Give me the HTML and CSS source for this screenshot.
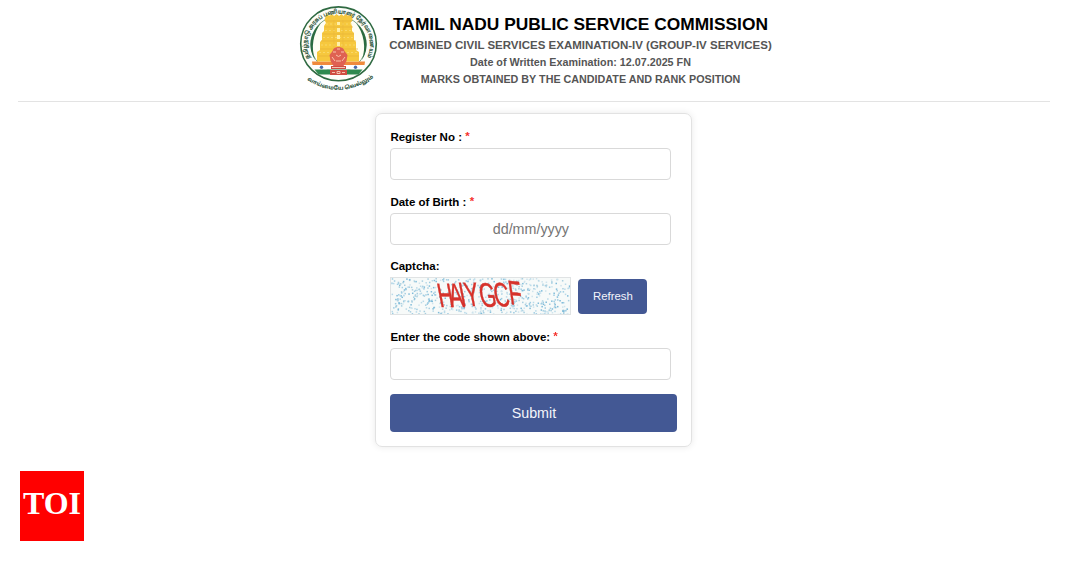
FILE: index.html
```html
<!DOCTYPE html>
<html lang="en">
<head>
    <meta charset="UTF-8">
    <title>Tamil Nadu Public Service Commission</title>
    <link rel="stylesheet" href="styles.css">
</head>
<body>
    <header class="header">
        <svg class="emblem" viewBox="0 0 78 86">
            <defs>
                <path id="top-arc" d="M10.500 53 A31.3 31.3 0 1 1 66.500 53"/>
                <path id="bottom-arc" d="M3 71 Q38.5 97 76 70"/>
            </defs>
            <ellipse cx="38.5" cy="37.8" rx="37.8" ry="36.9" fill="#fdfdf9" stroke="#2f6a42" stroke-width="1.6"/>
            <circle cx="38.5" cy="38" r="27.6" fill="#fffef4" stroke="#5d8a66" stroke-width=".8"/>
            <path d="M21 17 A27.5 27.5 0 0 0 15 54 A40 40 0 0 1 21 17zM56 17 A27.5 27.5 0 0 1 62 54 A40 40 0 0 0 56 17z" fill="#2b6b40"/>
            <!-- flag band -->
            <path d="M12 55.500h53l-.5 3.500h-52z" fill="#f08a3c"/>
            <path d="M12.500 59h52l-2 4.500h-48z" fill="#fff"/>
            <path d="M14.500 63.500h48l-4 5h-40z" fill="#2f8a50"/>
            <circle cx="21.5" cy="61.3" r="1.7" fill="#4868a8"/>
            <circle cx="55.5" cy="61.3" r="1.7" fill="#4868a8"/>
            <!-- temple tower -->
            <path d="M26.5 7 q1 3 3.5 2.5 l2-1.5 2 2 2.500-2 2.500 2 2.500-2 2 2 2-2 2 1.500 Q51 10 52 7 l.5 7-2 3 1.500 3v5l2 2v7l2 2v8l3 2v9.500H17V46l3-2v-8l2-2v-7l2-2v-5l2-3-1.500-3z" fill="#f6c83e"/>
            <g fill="none" stroke="#e6b138" stroke-width=".7">
                <path d="M26 15h26M25 21h28M23 28h31M21 35h35M20 43h38M18 50h41"/>
                <path d="M26 18h26M25 24.500h28M23 31.500h31M21 39h35M19 46.500h39" stroke="#fbe07c" stroke-dasharray="2 2"/>
                <path d="M34 14v28M43 14v28" stroke="#ecb93a"/>
            </g>
            <path d="M37 16h3v3h-3zM37 22h3v4h-3zM37 29h3v4h-3zM37 36h3v4h-3z" fill="#fff0a8"/>
            <!-- lion capital -->
            <path d="M32.500 45 q1-4 6-4 t6 4 l3 4-1 6-3 5h-10l-3-5-1-6z" fill="#df6152"/>
            <path d="M33 46h3M41 46h3M36 49q2.500 3 5 0M37 43h3M32 51l3 4M45 51l-3 4M36 55h5" stroke="#f9c4ae" fill="none"/>
            <path d="M31 60h15v3H31zM30 64h17v5H30z" fill="#cf4d42"/>
            <path d="M32 61.500h13M32 66.500h3M37 65.500h3v2h-3zM42 66.500h3" stroke="#f3c3b0" fill="none"/>
            <text class="emblem-text"><textPath href="#top-arc" startOffset="1" textLength="124" lengthAdjust="spacingAndGlyphs">தமிழ்நாடு அரசுப் பணியாளர் தேர்வாணையம்</textPath></text>
            <text class="emblem-text motto"><textPath href="#bottom-arc" startOffset="5" textLength="71" lengthAdjust="spacingAndGlyphs">வாய்மையே வெல்லும்</textPath></text>
        </svg>
        <div class="titles">
            <h1>TAMIL NADU PUBLIC SERVICE COMMISSION</h1>
            <h2>COMBINED CIVIL SERVICES EXAMINATION-IV (GROUP-IV SERVICES)</h2>
            <h3>Date of Written Examination: 12.07.2025 FN</h3>
            <h3>MARKS OBTAINED BY THE CANDIDATE AND RANK POSITION</h3>
        </div>
    </header>

    <form class="card">
        <label for="regno">Register No : <span class="required">*</span></label>
        <input type="text" id="regno">

        <label for="dob">Date of Birth : <span class="required">*</span></label>
        <input type="text" id="dob" class="dob" placeholder="dd/mm/yyyy">

        <label for="code">Captcha:</label>
        <div class="captcha-row">
            <div class="captcha">
                <canvas id="noise" width="179" height="36"></canvas>
                <svg class="captcha-text" viewBox="0 0 179 36">
                    <text transform="skewX(11) scale(.62 1)" x="70 88 105 114 137 160 184" y="28.500 28.500 27.500 27.500 28.500 28 26" rotate="0 0 0 0 1 2 4">HAIYGCF</text>
                </svg>
            </div>
            <button type="button" class="refresh" onclick="drawNoise()">Refresh</button>
        </div>

        <label for="code">Enter the code shown above: <span class="required">*</span></label>
        <input type="text" id="code">

        <button type="button" class="submit">Submit</button>
    </form>

    <div class="toi">TOI</div>

    <script>
        let seed = 7;

        function rand() {
            seed = (seed * 16807) % 2147483647;
            return seed / 2147483647;
        }

        // Speckled captcha background
        function drawNoise() {
            const canvas = document.getElementById('noise');
            const ctx = canvas.getContext('2d');
            const colors = ['#7fbbd9', '#9fcce2', '#b9dae9', '#cfe4ed', '#a9cfe0'];
            ctx.clearRect(0, 0, canvas.width, canvas.height);
            for (let i = 0; i < 620; i++) {
                ctx.fillStyle = colors[Math.floor(rand() * colors.length)];
                ctx.fillRect(rand() * 179, rand() * 36, 1.5, 1.5);
            }
        }

        drawNoise();
    </script>
</body>
</html>
```
FILE: styles.css
```css
body {
    font-family: "Liberation Sans", Arial, sans-serif;
    margin: 0;
    background-color: #fff;
    color: #000;
}
.header {
    display: flex;
    justify-content: center;
    gap: 11px;
    height: 95px;
    margin: 0 18px;
    padding-top: 6px;
    padding-left: 4px;
    border-bottom: 1px solid #e3e3e3;
}
.emblem {
    width: 78px;
    height: 86px;
    overflow: visible;
}
.emblem-text {
    font-family: "Noto Sans Tamil", "Noto Sans", sans-serif;
    font-size: 6px;
    font-weight: bold;
    fill: #234d34;
}
.motto {
    font-size: 5.5px;
}
.titles {
    text-align: center;
    white-space: nowrap;
}
.titles h1, .titles h2, .titles h3 {
    margin: 0;
}
.titles h1 {
    font-size: 17.35px;
    line-height: 20px;
    padding-top: 8px;
}
.titles h2 {
    font-size: 11.5px;
    line-height: 17px;
    margin-top: 3px;
    color: #555;
}
.titles h3 {
    font-size: 10.75px;
    line-height: 17px;
    color: #555;
}
.card {
    width: 287px;
    height: 304px;
    margin: 11px 0 0 375.4px;
    padding: 14px;
    border: 1px solid #e2e2e2;
    border-radius: 7px;
    box-shadow: 0 0 7px rgba(0, 0, 0, 0.09);
}
label {
    display: block;
    height: 20px;
    line-height: 19px;
    font-size: 11.5px;
    font-weight: bold;
}
.required {
    color: #f5322d;
    position: relative;
    top: -1px;
}
input {
    display: block;
    width: 281px;
    height: 32px;
    margin: 0 0 13px;
    padding: 0 10px;
    border: 1px solid #d9d9d9;
    border-radius: 4px;
    box-sizing: border-box;
    background-color: #fff;
    font-family: inherit;
    font-size: 14.3px;
}
.dob {
    text-align: center;
    margin-bottom: 12px;
}
.dob::placeholder {
    color: #757575;
}
.captcha-row {
    display: flex;
    align-items: center;
    gap: 7px;
    height: 38px;
    margin-bottom: 13px;
}
.captcha {
    position: relative;
    width: 179px;
    height: 36px;
    border: 1px solid #e0e3e4;
    background-color: #f7faf9;
}
.captcha canvas {
    display: block;
}
.captcha-text {
    position: absolute;
    top: 0;
    left: 0;
    width: 179px;
    height: 36px;
    overflow: visible;
    font-size: 34px;
    fill: #d6322b;
    stroke: #d6322b;
    stroke-width: 0.5px;
}
button {
    border: none;
    border-radius: 4px;
    background-color: #435894;
    color: #f3f5fb;
    font-family: inherit;
    cursor: pointer;
}
.refresh {
    width: 69px;
    height: 35px;
    padding: 0;
    font-size: 11.4px;
}
.submit {
    display: block;
    width: 287px;
    height: 38px;
    margin-top: 14px;
    font-size: 14.3px;
}
.toi {
    width: 64px;
    height: 70px;
    margin: 24px 0 0 20px;
    background-color: #f00;
    color: #fff;
    font-family: "Liberation Serif", "Times New Roman", serif;
    font-size: 32px;
    font-weight: bold;
    line-height: 65px;
    text-align: center;
}
```
